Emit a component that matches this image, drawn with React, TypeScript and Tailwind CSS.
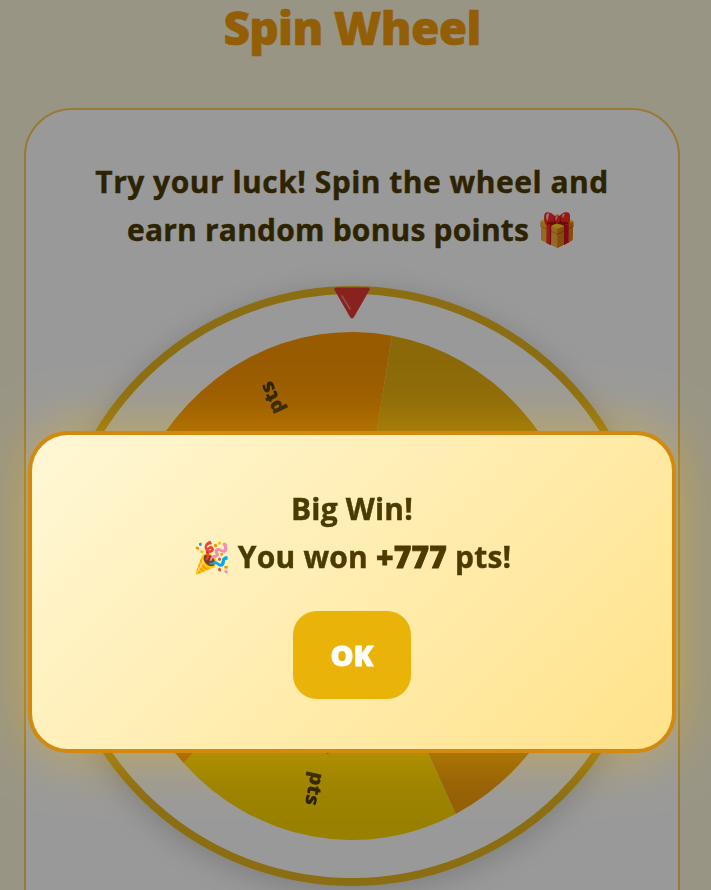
export default function App() {
  const C = 254;
  const pt = (a: number, r: number) => {
    const t = (a * Math.PI) / 180;
    return `${C + r * Math.sin(t)} ${C - r * Math.cos(t)}`;
  };
  const segs = [
    { from: 297.8, to: 369.8, color: "#ff9800", value: "50", at: 335.8 },
    { from: 9.8, to: 81.8, color: "#e8b010", value: "100", at: 47.8 },
    { from: 81.8, to: 153.8, color: "#f59e0b", value: "200", at: 119.8 },
    { from: 153.8, to: 225.8, color: "#ffd700", value: "777", at: 191.8 },
    { from: 225.8, to: 297.8, color: "#ff9800", value: "500", at: 263.8 },
  ];
  return (
    <div className="relative h-[890px] w-[711px] overflow-hidden bg-[#fdf8de] font-['Open_Sans','Liberation_Sans',sans-serif]">
      <div className="w-[704px]">
        <h1 className="h-[108px] text-center text-[46px] leading-[54px] font-extrabold tracking-[-0.7px] text-[#f59e0b] [-webkit-text-stroke:0.6px_#f59e0b]">
          Spin Wheel
        </h1>
        <div className="mx-[24px] h-[900px] rounded-[48px] border-2 border-[#ffca5c] bg-white pt-[48px]">
          <p className="text-center text-[30px] leading-[48px] font-bold text-[#4d3b00] [-webkit-text-stroke:0.4px_#4d3b00]">
            <span className="tracking-[0.5px]">Try your luck! Spin the wheel and</span>
            <br />
            <span className="tracking-[0.2px]">earn random bonus points</span> <span className="text-[32px] leading-none">🎁</span>
          </p>
          <div className="relative mx-auto mt-[32px] flex h-[600px] w-[600px] items-center justify-center rounded-full border-8 border-[#e8b820] shadow-[0_6px_30px_rgba(0,0,0,0.18)]">
            <svg
              width="470"
              height="508"
              viewBox="0 0 508 508"
              preserveAspectRatio="none"
              className="blur-[0.5px]"
            >
              {segs.map((s) => (
                <path
                  key={s.from}
                  d={`M${C} ${C} L${pt(s.from, C)} A${C} ${C} 0 0 1 ${pt(s.to, C)} Z`}
                  fill={s.color}
                />
              ))}
              {segs.map((s) => (
                <text
                  key={s.value}
                  transform={`rotate(${s.at} ${C} ${C}) translate(${C} ${C - 224}) rotate(-90)`}
                  textAnchor="end"
                  dominantBaseline="middle"
                  fontSize="21"
                  fontWeight="800"
                  fill="#453500"
                >
                  {s.value}
                  <tspan dx="20">pts</tspan>
                </text>
              ))}
            </svg>
            <svg width="38" height="34" viewBox="0 0 38 34" className="absolute top-[-8px] left-[273px]">
              <path d="M3 1.5 H35 Q37.5 1.5 36.5 4 L21 31 Q19 34 17 31 L1.5 4 Q0.5 1.5 3 1.5 Z" fill="#e53935" />
              <path d="M9 10 L17 23" stroke="#ffffff" strokeOpacity="0.4" strokeWidth="1.5" strokeLinecap="round" />
            </svg>
          </div>
        </div>
      </div>
      <div className="fixed inset-0 bg-black/40">
        <div className="w-[704px] px-[28px] pt-[431px]">
          <div className="flex h-[322px] flex-col items-center rounded-[40px] border-4 border-[#d18a0f] bg-[linear-gradient(135deg,#fff8d6,#ffe28a)] pt-[50px] shadow-[0_0_60px_rgba(255,193,7,0.45)]">
            <p className="text-center text-[30px] leading-[48px] font-bold tracking-[0.2px] text-[#4a3b00] [-webkit-text-stroke:0.4px_#4a3b00]">
              Big Win!
              <br />
              🎉 You won <span className="font-extrabold [-webkit-text-stroke:0.8px_#4a3b00]">+777</span> pts!
            </p>
            <button className="mt-[30px] h-[88px] w-[118px] rounded-[24px] bg-[#eab308] text-[29px] font-extrabold text-white [-webkit-text-stroke:0.8px_#ffffff]">
              OK
            </button>
          </div>
        </div>
      </div>
    </div>
  );
}
